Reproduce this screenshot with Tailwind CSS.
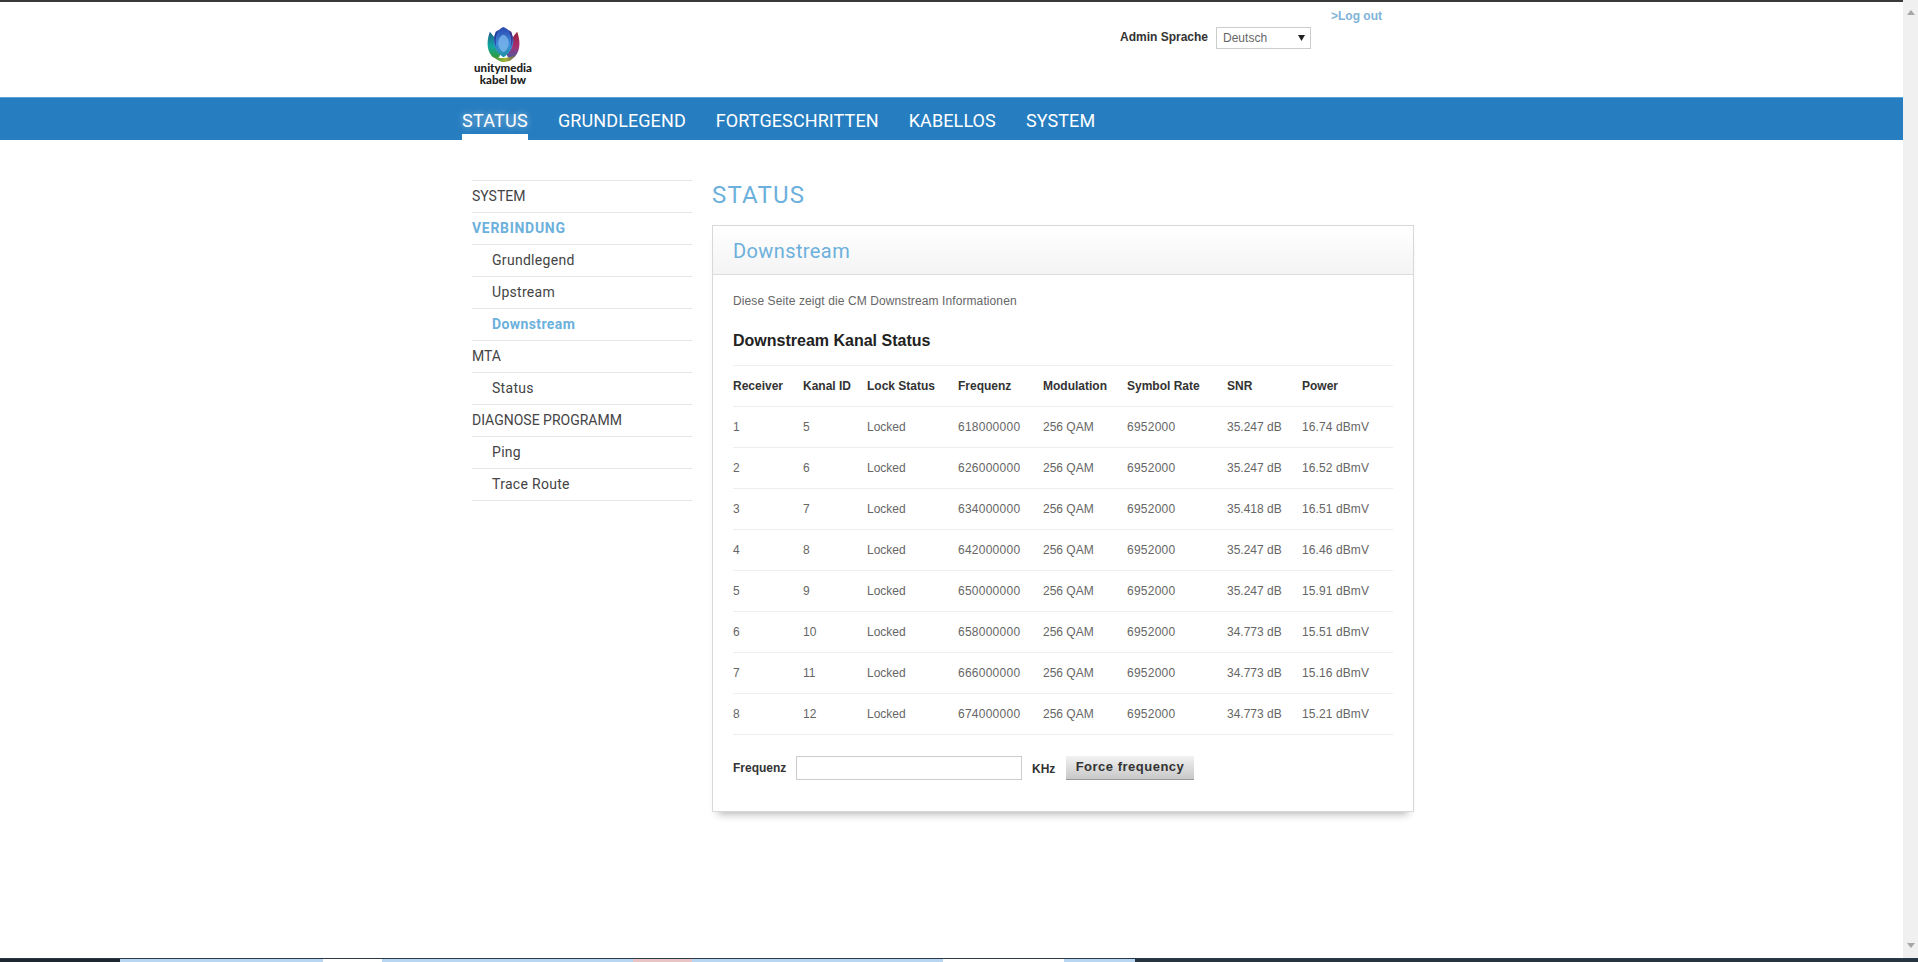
<!DOCTYPE html>
<html lang="de">
<head>
    <meta charset="UTF-8">
    <title>Status - Downstream</title>
    <script src="https://cdn.jsdelivr.net/npm/@tailwindcss/browser@4"></script>
</head>
<body class="h-[962px] overflow-hidden bg-white font-['Liberation_Sans',sans-serif] text-xs text-[#666]">
    <div class="flex h-[958px]">
        <div class="flex-1 min-w-0">
            <!-- top edge -->
            <div class="h-[2px] bg-[#3a3a3a]"></div>

            <!-- header -->
            <header class="h-[95px]">
                <div class="relative mx-auto w-[979px]">
                    <div class="absolute left-[6px] top-[24px] w-[70px] flex flex-col items-center">
                        <svg width="35" height="37" viewBox="0 0 36 38">
                            <defs>
                                <linearGradient id="centre" x1="0" y1="0" x2="0" y2="1">
                                    <stop offset="0" stop-color="#2a48b0"/>
                                    <stop offset="0.6" stop-color="#3f8fdc"/>
                                    <stop offset="1" stop-color="#1f8fa0"/>
                                </linearGradient>
                                <linearGradient id="left" x1="0" y1="0" x2="0" y2="1">
                                    <stop offset="0" stop-color="#1b5f8a"/>
                                    <stop offset="0.55" stop-color="#12a8a0"/>
                                    <stop offset="1" stop-color="#2f9a35"/>
                                </linearGradient>
                                <linearGradient id="right" x1="0" y1="0" x2="0" y2="1">
                                    <stop offset="0" stop-color="#9c1f38"/>
                                    <stop offset="0.55" stop-color="#a82f70"/>
                                    <stop offset="1" stop-color="#4a5aa8"/>
                                </linearGradient>
                                <linearGradient id="base" x1="0" y1="0" x2="1" y2="0">
                                    <stop offset="0" stop-color="#1f9040"/>
                                    <stop offset="0.55" stop-color="#a5b52f"/>
                                    <stop offset="1" stop-color="#6a5060"/>
                                </linearGradient>
                            </defs>
                            <path d="M4 6C1 14 0 24 6 31C11 35 14 33 15 28C14 19 9 12 4 6Z" fill="url(#left)"/>
                            <path d="M32 6C35 14 36 24 30 31C25 35 22 33 21 28C22 19 27 12 32 6Z" fill="url(#right)"/>
                            <path d="M6 29C10 35 15 37 19 37C24 37 28 34 31 29C26 32 22 33 18 33C13 33 9 32 6 29Z" fill="url(#base)"/>
                            <path d="M18 1C11 4 7 10 8 17C9 25 14 30 18 32C22 30 27 25 28 17C29 10 25 4 18 1Z" fill="url(#centre)"/>
                            <path d="M18 9C13 11 12 16 13 20C14 24 16 26 18 27C20 26 22 24 23 20C24 16 23 11 18 9Z" fill="#7fb8ee" fill-opacity="0.75"/>
                            <path d="M10 6C8 11 8 17 11 23C9 15 10 10 13 4Z" fill="#233f98"/>
                            <path d="M26 6C28 11 28 17 25 23C27 15 26 10 23 4Z" fill="#3f3590"/>
                        </svg>
                        <div class="-mt-[1px] text-center font-['Lato',sans-serif] text-[11.5px] leading-[12px] font-black text-[#222]">unitymedia<br>kabel bw</div>
                    </div>
                    <a class="absolute left-[869px] top-[7px] text-xs leading-[14px] font-bold text-[#7fb3d8]">&gt;Log out</a>
                    <div class="absolute left-[658px] top-[25px] flex items-center">
                        <label class="-mt-[2px] text-xs font-bold text-[#333]">Admin Sprache</label>
                        <div class="relative ml-[8px]">
                            <select class="block h-[22px] w-[95px] appearance-none border border-[#ccc] bg-white pl-[6px] text-xs text-[#666]">
                                <option>Deutsch</option>
                            </select>
                            <svg class="absolute right-[6px] top-[8px]" width="7" height="6" viewBox="0 0 7 6"><path d="M0 0H7L3.5 6Z" fill="#222"/></svg>
                        </div>
                    </div>
                </div>
            </header>

            <!-- main nav -->
            <nav class="h-[43px] border-t border-[#5aa3d6] bg-[#267dc0]">
                <ul class="mx-auto flex h-[42px] w-[979px] gap-[30px] font-['Roboto',sans-serif] text-[18px] tracking-[0.1px] text-white">
                    <li class="flex h-full items-center border-b-[6px] border-white pt-[9px] tracking-[0.25px] [text-shadow:0_0_6px_rgba(255,255,255,0.6)]">STATUS</li>
                    <li class="flex h-full items-center pt-[3px]">GRUNDLEGEND</li>
                    <li class="flex h-full items-center pt-[3px]">FORTGESCHRITTEN</li>
                    <li class="flex h-full items-center pt-[3px]">KABELLOS</li>
                    <li class="flex h-full items-center pt-[3px]">SYSTEM</li>
                </ul>
            </nav>

            <div class="mx-auto flex w-[979px] pt-[40px]">
                <!-- side menu -->
                <aside class="ml-[10px] w-[220px] border-t border-[#e6e6e6] font-['Roboto',sans-serif] text-[14px] text-[#444]">
                    <div class="flex h-[32px] items-center border-b border-[#e6e6e6]">SYSTEM</div>
                    <div class="flex h-[32px] items-center border-b border-[#e6e6e6] font-bold tracking-[0.7px] text-[#6cb0dc]">VERBINDUNG</div>
                    <div class="flex h-[32px] items-center border-b border-[#e6e6e6] pl-[20px] tracking-[0.3px]">Grundlegend</div>
                    <div class="flex h-[32px] items-center border-b border-[#e6e6e6] pl-[20px] tracking-[0.3px]">Upstream</div>
                    <div class="flex h-[32px] items-center border-b border-[#e6e6e6] pl-[20px] font-bold tracking-[0.4px] text-[#6cb0dc]">Downstream</div>
                    <div class="flex h-[32px] items-center border-b border-[#e6e6e6]">MTA</div>
                    <div class="flex h-[32px] items-center border-b border-[#e6e6e6] pl-[20px] tracking-[0.3px]">Status</div>
                    <div class="flex h-[32px] items-center border-b border-[#e6e6e6]">DIAGNOSE PROGRAMM</div>
                    <div class="flex h-[32px] items-center border-b border-[#e6e6e6] pl-[20px] tracking-[0.3px]">Ping</div>
                    <div class="flex h-[32px] items-center border-b border-[#e6e6e6] pl-[20px] tracking-[0.3px]">Trace Route</div>
                </aside>

                <!-- content -->
                <main class="ml-[20px] w-[702px]">
                    <h1 class="h-[45px] font-['Roboto',sans-serif] text-[24px] leading-[30px] tracking-[1.2px] text-[#6cb0dc]">STATUS</h1>
                    <section class="h-[587px] border border-[#d8d8d8] shadow-[0_8px_8px_-6px_rgba(0,0,0,0.3)]">
                        <div class="flex h-[49px] items-center border-b border-[#ddd] bg-gradient-to-b from-white to-[#f4f4f4] px-[20px] pt-[2px] font-['Roboto',sans-serif] text-[20px] tracking-[0.4px] text-[#6cb0dc]">Downstream</div>
                        <div class="px-[20px]">
                            <p class="mt-[19px] text-xs leading-[14px] tracking-[0.1px]">Diese Seite zeigt die CM Downstream Informationen</p>
                            <h2 class="mt-[23px] text-base leading-[20px] font-bold text-[#222]">Downstream Kanal Status</h2>
                            <table class="mt-[14px] w-[660px] table-fixed border-t border-[#eee]">
                                <thead>
                                    <tr class="h-[41px] border-b border-[#eee] text-left font-bold text-[#333]">
                                        <th class="w-[70px]">Receiver</th>
                                        <th class="w-[64px]">Kanal ID</th>
                                        <th class="w-[91px]">Lock Status</th>
                                        <th class="w-[85px]">Frequenz</th>
                                        <th class="w-[84px]">Modulation</th>
                                        <th class="w-[100px]">Symbol Rate</th>
                                        <th class="w-[75px]">SNR</th>
                                        <th>Power</th>
                                    </tr>
                                </thead>
                                <tbody class="[&_td:nth-child(4)]:tracking-[0.25px] [&_td:nth-child(6)]:tracking-[0.25px] [&_td:nth-child(8)]:tracking-[0.1px]">
                                    <tr class="h-[41px] border-b border-[#eee]"><td>1</td><td>5</td><td>Locked</td><td>618000000</td><td>256 QAM</td><td>6952000</td><td>35.247 dB</td><td>16.74 dBmV</td></tr>
                                    <tr class="h-[41px] border-b border-[#eee]"><td>2</td><td>6</td><td>Locked</td><td>626000000</td><td>256 QAM</td><td>6952000</td><td>35.247 dB</td><td>16.52 dBmV</td></tr>
                                    <tr class="h-[41px] border-b border-[#eee]"><td>3</td><td>7</td><td>Locked</td><td>634000000</td><td>256 QAM</td><td>6952000</td><td>35.418 dB</td><td>16.51 dBmV</td></tr>
                                    <tr class="h-[41px] border-b border-[#eee]"><td>4</td><td>8</td><td>Locked</td><td>642000000</td><td>256 QAM</td><td>6952000</td><td>35.247 dB</td><td>16.46 dBmV</td></tr>
                                    <tr class="h-[41px] border-b border-[#eee]"><td>5</td><td>9</td><td>Locked</td><td>650000000</td><td>256 QAM</td><td>6952000</td><td>35.247 dB</td><td>15.91 dBmV</td></tr>
                                    <tr class="h-[41px] border-b border-[#eee]"><td>6</td><td>10</td><td>Locked</td><td>658000000</td><td>256 QAM</td><td>6952000</td><td>34.773 dB</td><td>15.51 dBmV</td></tr>
                                    <tr class="h-[41px] border-b border-[#eee]"><td>7</td><td>11</td><td>Locked</td><td>666000000</td><td>256 QAM</td><td>6952000</td><td>34.773 dB</td><td>15.16 dBmV</td></tr>
                                    <tr class="h-[41px] border-b border-[#eee]"><td>8</td><td>12</td><td>Locked</td><td>674000000</td><td>256 QAM</td><td>6952000</td><td>34.773 dB</td><td>15.21 dBmV</td></tr>
                                </tbody>
                            </table>
                            <div class="mt-[21px] flex h-[24px] items-center">
                                <label class="w-[63px] text-xs font-bold text-[#333]">Frequenz</label>
                                <input type="text" class="h-[24px] w-[226px] border border-[#ccc] bg-white">
                                <span class="ml-[10px] w-[34px] pt-[2px] text-xs font-bold text-[#333]">KHz</span>
                                <button class="h-[24px] w-[128px] border-b border-[#999] bg-gradient-to-b from-[#f2f2f2] to-[#c8c8c8] pb-[2px] text-[13px] font-bold tracking-[0.5px] text-[#333]">Force frequency</button>
                            </div>
                        </div>
                    </section>
                </main>
            </div>
        </div>

        <!-- scrollbar -->
        <div class="flex w-[15px] shrink-0 flex-col items-center justify-between bg-[#f0f0f0] py-[10px]">
            <svg width="8" height="5" viewBox="0 0 8 5"><path d="M4 0L8 5H0Z" fill="#a6a6a6"/></svg>
            <svg width="8" height="5" viewBox="0 0 8 5"><path d="M0 0H8L4 5Z" fill="#a6a6a6"/></svg>
        </div>
    </div>

    <!-- window task bar peeking in at the bottom -->
    <div class="flex h-[4px] border-t border-[#2a3a48] bg-[#2a3a48]">
        <div class="w-[120px] bg-[#1c2730]"></div>
        <div class="w-[203px] bg-[#b8d6f2]"></div>
        <div class="w-[59px] bg-white"></div>
        <div class="w-[251px] bg-[#b8d6f2]"></div>
        <div class="w-[59px] bg-[#e8c4c4]"></div>
        <div class="w-[251px] bg-[#b8d6f2]"></div>
        <div class="w-[121px] bg-white"></div>
        <div class="w-[71px] bg-[#b8d6f2]"></div>
        <div class="flex-1 bg-[#26343f]"></div>
    </div>
</body>
</html>
